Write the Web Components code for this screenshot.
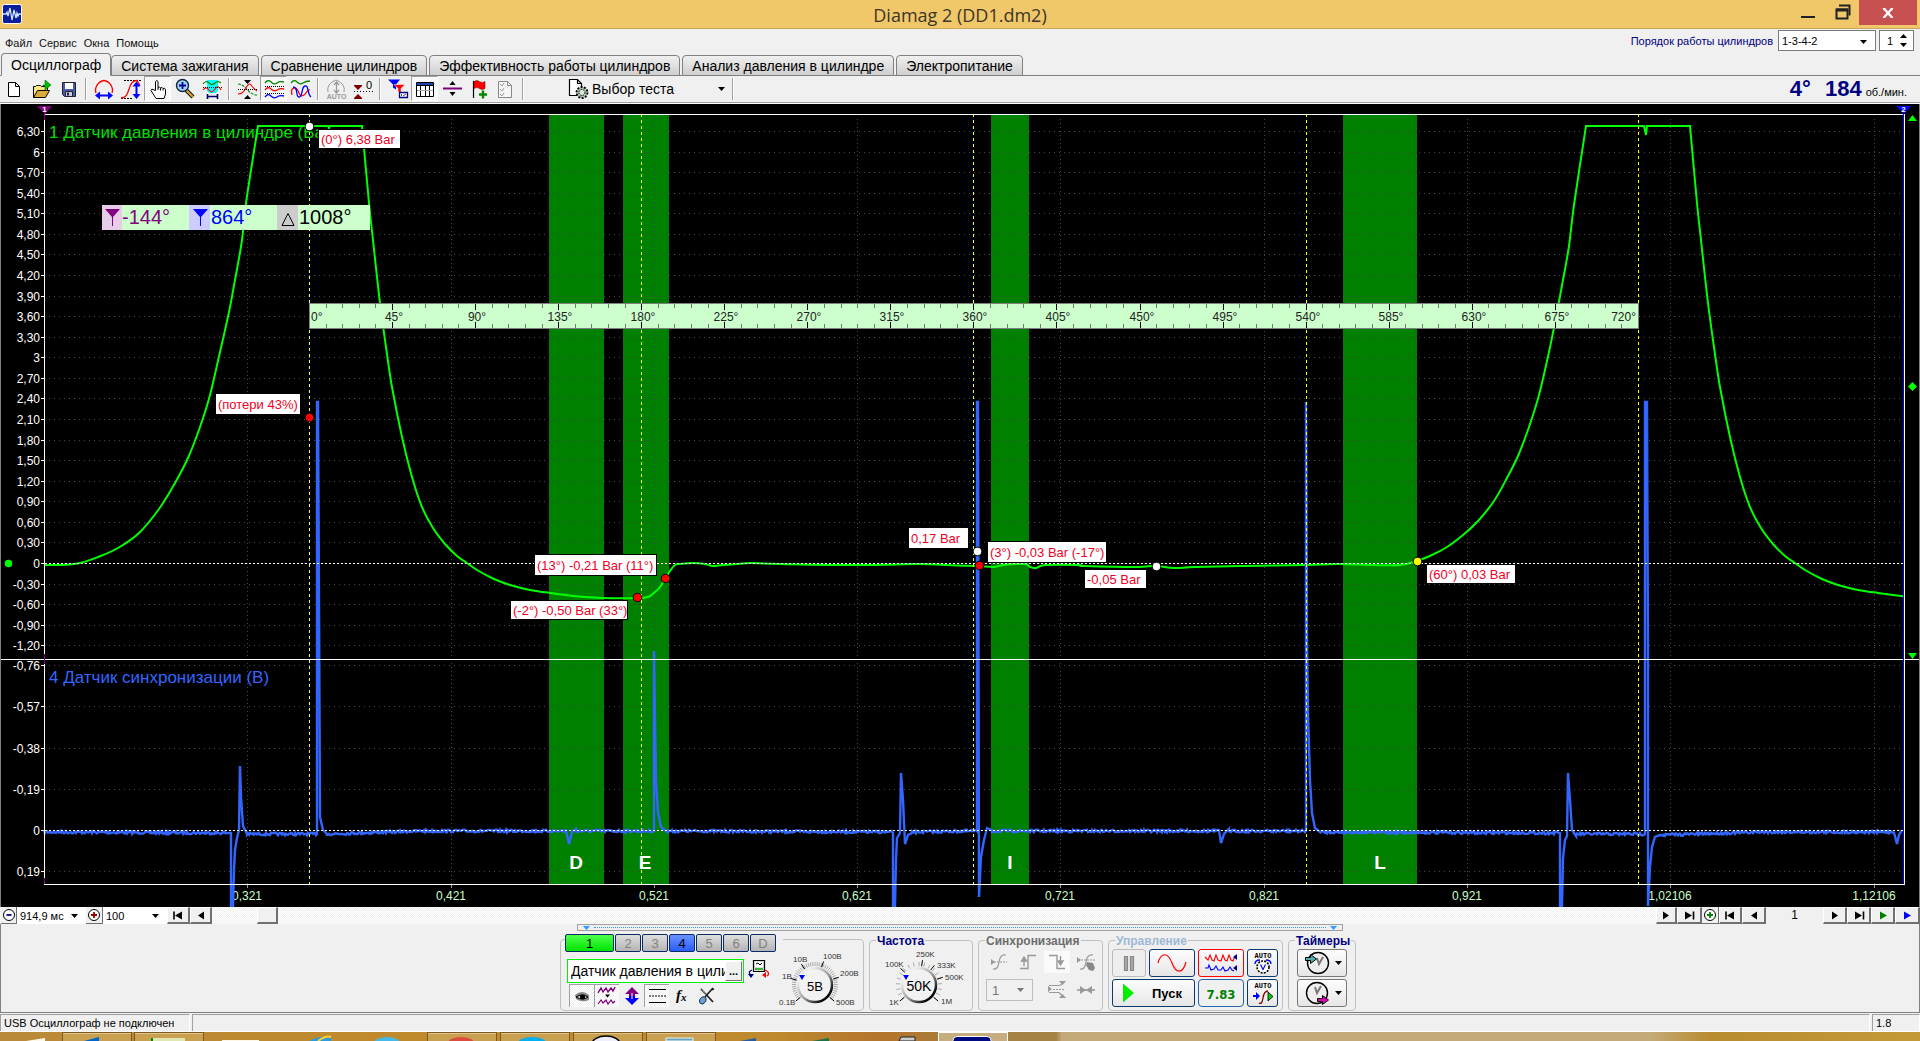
<!DOCTYPE html>
<html lang="ru">
<head>
<meta charset="utf-8">
<title>Diamag 2 (DD1.dm2)</title>
<style>
html,body{margin:0;height:100%}
body{font-family:"Liberation Sans",Arial,sans-serif;font-size:12px;color:#000;background:#f0f0f0}
</style>
</head>
<body>
<dm-app>
  <dm-titlebar slot="title">Diamag 2 (DD1.dm2)</dm-titlebar>
  <dm-header slot="header"></dm-header>
  <dm-toolbar slot="toolbar"></dm-toolbar>
  <dm-scope slot="scope"></dm-scope>
  <dm-timebar slot="timebar"></dm-timebar>
  <dm-panel slot="panel"></dm-panel>
  <dm-status slot="status"></dm-status>
  <dm-taskbar slot="taskbar"></dm-taskbar>
</dm-app>
<script>
const BASE = `:host,*{box-sizing:border-box}button,input,select{font:inherit;color:inherit;margin:0;padding:0;border:0;background:none;border-radius:0;appearance:none;-webkit-appearance:none}svg{display:block}`;
const define = (name, css, html) => customElements.define(name, class extends HTMLElement {
  connectedCallback() {
    if (this.shadowRoot) return;
    const t = document.createElement('template');
    t.innerHTML = `<style>${BASE}${css}</style>${typeof html === 'function' ? html(this) : html}`;
    this.attachShadow({mode: 'open'}).append(t.content.cloneNode(true));
  }
});

/* ---------- icons ---------- */
const P = (d, s, w = 1, f = 'none', x = '') => `<path d="${d}" stroke="${s}" stroke-width="${w}" fill="${f}" ${x}/>`;
const GEAR = '#a8c0a8';
const ICONS = {
  new: [24,22, P('M5.500 4.500h7l4 4v10h-11z M12.500 4.500v4h4','#000',1,'#fff')],
  open: [24,22, P('M3.500 19.500v-11h2l1-1h4l1 1h6v4','#000',1,'#ffe88a')+P('M3.500 19.500l4-7h12l-4 7z','#000',1,'#d9a93a')+P('M13 7h2V2l6 5-6 5V8h-2z','#006400',.6,'#0b0')],
  save: [24,22, P('M5.500 4.500h13v14h-11l-2-2z','#223',1,'#4a5aa8')+P('M8 5h8v6H8z','none',0,'#fff')+P('M8.500 13.500h7v5h-7z','#223',1,'#ccd')+P('M10 14.500h2v3h-2z','none',0,'#224')],
  arcx: [24,22, P('M4 15C2 9 7 3 12 2.500C17 3 22 9 20 15','#f00',1.300)+P('M5 17.500h14','#00f',2)+P('M8 13.500v8l-5-4zM16 13.500v8l5-4z','none',0,'#00f')],
  arcy: [24,22, P('M5 2.500h18M2 20.500h12','#000',1,'none','stroke-dasharray="2 1"')+P('M2 20C12 20 8 2.500 18 2.500l3 5','#f00',1.300)+P('M17.500 6v12','#00f',2)+P('M13.500 8.500h8l-4-5zM13.500 16h8l-4 5z','none',0,'#00f')],
  hand: [24,22, P('M9.500 12.500V3.500q1.500-2 2.500 0v6q1.500-1.500 2.500 .500q1.500-1.500 2.500 .500q2-1 2.500 1v4.500l-1.500 4.500h-8l-5-8q0-2 2-1z M12 9.500v2.500M14.500 10v2.500M17 10.500v2','#000',1,'#fff')],
  zoom: [24,22, P('M13 12l7 7','#000',4)+P('M13 12l7 7','#d8a030',2.400)+'<circle cx="9.500" cy="7.500" r="6" fill="#9cd4f4" stroke="#124" stroke-width="1.400"/>'+P('M9.500 4v7M6 7.500h7','#00a',1.800)],
  cyan: [24,22, P('M7 2h11v11l-2 2H9l-2-2z','none',0,'#0ff')+P('M3 6q3-4 6-1t6 0t6 0','#080',1.200)+P('M3 12q3-4 6 0t6-1t6 1','#f00',1.200)+P('M3 9.500h19','#000',1,'none','stroke-dasharray="1 1"')+P('M7.500 16v5M17.500 16v5M8 18.500h9','#006',1.600)],
  cross: [24,22, P('M3 6c8 0 10 11 19 11','#080',1.100,'none','stroke-dasharray="3 1"')+P('M3 16q5 0 8-6t5-3t6 6','#f00',1.100)+P('M3 11.500h19','#000',1,'none','stroke-dasharray="1 1"')+P('M9 2h7l-3.500 4zM9 21h7l-3.500-4z','none',0,'#000')],
  waves: [24,22, P('M3 5q3-4 6-1t6 1t7-1','#080',1.300)+P('M3 12q3-4 6-1t6 1t7-1','#f00',1.300)+P('M3 19q3-4 6-1t6 1t7-1','#00f',1.300)+P('M3 8.500h19M3 15.500h19','#000',1,'none','stroke-dasharray="1 1"')],
  waves2: [24,22, P('M2 5q3-4 6-1t6 1t7-2','#080',1.300)+P('M3 17c-2-8 4-9 6-4s3 6 6 4s3-6 6-5','#f00',1.300)+P('M4 9c6 0 2 10 6 10s2-10 6-11s2 8 6 11','#00f',1.300)],
  auto: [24,22, P('M4 14q-2-8 8-12q10 4 8 12','#999',1)+P('M12.500 5v9M10 7l2.500-3L15 7M10 12l2.500 3 2.500-3','#999',1.200)+'<text x="12.500" y="21" font-size="7" font-weight="bold" text-anchor="middle" fill="#999">AUTO</text>'],
  zero: [24,22, P('M3 8h8l-4 4zM3 20h8l-4-4z','none',0,'#800000')+P('M3 7.500h8M3 20.500h8','#800000',1)+P('M3 13.500h19','#000',1,'none','stroke-dasharray="1 2"')+'<text x="15" y="11" font-size="11" fill="#000">0</text>'],
  filter: [24,22, P('M2 1.500h12l-4 5v5l-3-2v-3z','none',0,'#00f')+P('M8 6.500h11l-4 4v5l-3-2v-3z','#fff',.5,'#f00')+P('M13.500 14.500h8v5h-8z','#00008b',1.300,'#fff')+P('M15.500 16v2M17 18l3-2','#555',1)],
  table: [24,22, P('M3.500 4.500h17v14h-17z','#000',1,'#fff')+P('M4 5h16v2H4z','none',0,'#24a')+P('M7.500 8v10M12.500 8v10M16.500 8v10M4 7.500h16','#000',1)+P('M4 12.500h16','#aaa',1)],
  split: [24,22, P('M3 10.500h19','#800080',2)+P('M9.500 7h6l-3-4zM9.500 14h6l-3 4z','none',0,'#000')],
  flag: [24,22, P('M6.500 3v17','#000',1.200)+P('M7 3.500q3-2 5.500 0t5.500 0v7q-3 2-5.500 0t-5.500 0z','#600',.5,'#f00')+P('M12 16.500h8M16 12.500v8','#080',2.400)],
  report: [24,22, P('M4.500 3.500h9l4 4v12h-13z','#888',1,'#f6f6f6')+P('M6 6l2 2 2-3M6 11l2 2 2-3M6 16l2 2 2-3','#999',1)+P('M13.500 3.500v4h4','#888',1)],
  test: [26,22, P('M4.500 1.500h8l4 4v12h-12z M12.500 1.500v4h4','#000',1.200,'#fff')+`<circle cx="17" cy="14.500" r="5.500" fill="${GEAR}" stroke="#000" stroke-width="1.800" stroke-dasharray="2 1.400"/><circle cx="17" cy="14.500" r="3" fill="#dfe8df" stroke="#000" stroke-dasharray="1.500 1"/>`],
  eye: [22,22, P('M4 10q7-6 14 0v5q-7 3-13-1z','none',0,'#888')+P('M5 12q6-4 12 0q-5 4-12 0','#000',1,'#ccc')+'<circle cx="11.500" cy="12" r="2.500"/>'],
  purple: [22,22, P('M2 8l3-5 2 4 3-4 2 4 3-4 2 3 2-4','#800080',1.400)+P('M2 19l3-4 2 3 3-3 2 4 3-4 2 3 2-2','#800080',1.200)+P('M9 9.500h5l-2.500 3z','none',0,'#000')],
  updown: [22,22, P('M11 2l7 7h-4v3H8V9H4z','none',0,'#800080')+P('M11 20l7-7h-4v-2H8v2H4z','none',0,'#00f')+P('M11 8v6','#fff',1)],
  lines: [22,22, P('M3 4.500h17M3 17.500h17','#000',1)+P('M3 11h17','#000',1,'none','stroke-dasharray="2 1"')],
  fx: [22,22, '<text x="5" y="15" font-family="Liberation Serif,serif" font-style="italic" font-weight="bold" font-size="15">f</text><text x="10" y="16" font-family="Liberation Serif,serif" font-style="italic" font-weight="bold" font-size="11">x</text>'],
  tools: [22,22, P('M5 4l12 13M17 3l-8 9M15 5l3-1','#222',1.800)+P('M5 3l5 7','#999',1)+P('M4 14q3-4 6-1q1 4-3 6q-5 0-3-5','#234',1,'#6a9fd8')],
  device: [22,22, P('M6.500 2.500h11v11h-11z','#000',1.200,'#ddd')+P('M8 4h8v5H8z','none',0,'#fff')+P('M8 11h8','#0a0',1.500)+P('M9 6l2-1 2 2 2-2','#000',1)+P('M5 12q-5 2-1 5','#00008b',1.300)+P('M1 16h6l-3 4z','none',0,'#00008b')+P('M18 12q6 3 2 6','#f00',1.300)+P('M19 14v6l-4-3z','none',0,'#f00')],
  s1: [20,20, P('M2 10h16','#999',1,'none','stroke-dasharray="2 1"')+P('M4 17q5 1 6-7t7-7','#999',1.200)+P('M2 7v6l4-3z','none',0,'#999')],
  s2: [20,20, P('M2 16.500h8v-13h8','#999',1.400)+P('M6 14V6M3.500 9L6 5l2.500 4z','#999',1.400,'#999')],
  s3: [20,20, P('M2 3.500h8v13h8','#999',1.400)+P('M13.500 4v8M11 9l2.500 4L16 9z','#999',1.400,'#999')],
  s4: [20,20, P('M2 8h18','#999',1,'none','stroke-dasharray="2 1"')+P('M4 17q5 1 6-7t7-7','#999',1.200)+P('M1 5v6l4-3z','none',0,'#999')+P('M11 10l6 1 2 5-2 3-4-1-3-5z','none',0,'#888')],
  s5: [20,20, P('M6 9.500h12','#999',1,'none','stroke-dasharray="2 1"')+P('M2 5.500h10l3-1M2 12.500h10l3 3','#999',1.200)+P('M12 1h7l-3.500 4zM12 18h7l-3.500-4zM1 6v6l4-3z','none',0,'#999')],
  s6: [20,20, P('M1 10h18','#999',1.600)+P('M4 6l6 4-6 4zM16 6l-6 4 6 4z','none',0,'#999')],
  pause: [30,22, P('M10.500 4.500h3v14h-3zM16.500 4.500h3v14h-3z','#888',1.200,'#aaa')],
  sine: [34,22, P('M3 11C6 0 13 0 17 11S28 22 31 10','#f00',1.200)],
  multi: [38,24, P('M3 6l3 3 2-5 2 5 2 1 2-6 2 5 3 1 2-6 2 5 2 1 2-6 2 5 2 1 2-5','#f00',1.100)+P('M3 17l3 0 1-3 2 5 3-1 2-3 2 4 3 0 2-3 2 4 3-1 2-3 2 3 2 1','#00f',1.100)+P('M35 3v6l-4-3zM35 14v6l-4-3z','none',0,'#00008b')],
  autov: [26,26, '<text x="13" y="8" font-family="Liberation Mono,monospace" font-size="7" font-weight="bold" text-anchor="middle">AUTO</text><circle cx="13" cy="17" r="6" fill="#fff" stroke="#000" stroke-width="1.600" stroke-dasharray="2 1.200"/>'+P('M10.500 14.500l2.500 5 2.500-5','#00f',1.200)+P('M5 14q0-4 5-4M21 14q0-4-5-4','#00f',1.300)],
  autop: [26,26, '<text x="13" y="8" font-family="Liberation Mono,monospace" font-size="7" font-weight="bold" text-anchor="middle">AUTO</text>'+P('M9 23q3 2 4-5t5-7','#800000',1.300)+P('M3 16h4','#00f',2)+P('M6 12v8l4-4z','none',0,'#00f')+P('M18 12v9l5-4.500z','#000',.8,'#0c0')],
  play: [14,22, P('M1 1.500v19l11-9.500z','none',0,'#0e0')],
  clock1: [28,24, '<circle cx="15" cy="12" r="10.500" fill="#eee" stroke="#000" stroke-width="1.400"/>'+P('M14 7l2 6 4-7','#777',2)+P('M2.500 6.500h5v-3l6 4.500-6 4.500v-3h-5z','#000',1,'#5aa')],
  clock2: [28,24, '<circle cx="14" cy="12" r="10.500" fill="#eee" stroke="#000" stroke-width="1.400"/>'+P('M12 6l2 6 4-7','#777',2)+P('M14.500 17.500h5v-3l6 4.500-6 4.500v-3h-5z','#000',1,'#d0b')],
  first: [14,11, P('M3 1.500v8','#000',1.600)+P('M11 1.500v8L4 5.500z','none',0,'#000')],
  prev: [14,11, P('M10 1.500v8L4 5.500z','none',0,'#000')],
  next: [14,11, P('M4 1.500v8l6-4z','none',0,'#000')],
  nextg: [14,11, P('M4 1.500v8l7-4z','none',0,'#008000')],
  nextb: [14,11, P('M4 1.500v8l7-4z','none',0,'#00f')],
  last: [14,11, P('M3 1.500v8l7-4z','none',0,'#000')+P('M11.500 1.500v8','#000',1.600)],
  minus: [14,14, '<circle cx="7" cy="7" r="5.500" fill="#fff" stroke="#000"/>'+P('M4.500 7h5','#00008b',1.800)],
  plus: [14,14, '<circle cx="7" cy="7" r="5.500" fill="#fff" stroke="#000"/>'+P('M4 7h6M7 4v6','#900',1.800)],
  plusg: [14,14, '<circle cx="7" cy="7" r="5.500" fill="#fff" stroke="#000"/>'+P('M4 7h6M7 4v6','#080',1.800)],
  down: [7,4, P('M0 0h7L3.500 4z','none',0,'#000')],
  up: [7,4, P('M0 4h7L3.500 0z','none',0,'#000')],
  logo: [20,20, '<rect x=".5" y=".5" width="19" height="19" rx="2" fill="#0a1e9c" stroke="#fff"/>'+P('M1 10h3l1-2 1 4 2-8 2 12 2-10 2 8 1-5 1 3 1-2h3','#cfe4ff',1.300)],
  restore: [16,16, P('M1.500 5.500h11v9h-11z','#222',2)+P('M4 1.500h10.500v10','#222',2)+P('M1 6h12','#222',3)]
};
define('dm-icon', ':host{display:inline-block;flex:none}', el => {
  const [w, h, s] = ICONS[el.getAttribute('name')];
  return `<svg width="${w}" height="${h}" viewBox="0 0 ${w} ${h}" aria-hidden="true">${s}</svg>`;
});
const I = n => `<dm-icon name="${n}"></dm-icon>`;

/* ---------- frame ---------- */
define('dm-app', ':host{display:flex;flex-direction:column;min-height:100vh;overflow:hidden}slot[name=panel]::slotted(*){flex:1}',
  ['title','header','toolbar','scope','timebar','panel','status','taskbar'].map(n => `<slot name="${n}"></slot>`).join(''));

define('dm-titlebar', `
:host{display:grid;grid-template-columns:1fr auto 1fr;height:29px;background:#f0c869;border-bottom:1px solid #c9a45a}
.l{padding:4px 2px}h1{margin:0;font:400 18px/31px "Open Sans","Noto Sans",sans-serif;color:#3c3528}
.r{display:flex;justify-content:flex-end;gap:20px;padding-right:3px}
.r button{height:25px;display:flex;justify-content:center}
.min{width:14px;align-items:flex-end;padding-bottom:7px}.min i{width:14px;height:2px;background:#222}
.res{width:16px;padding-top:4px;margin-right:-12px}
.cl{width:58px;background:#c75050;align-items:center}`,
`<div class="l">${I('logo')}</div><h1><slot></slot></h1><div class="r">
<button class="min" aria-label="Свернуть"><i></i></button><button class="res" aria-label="Восстановить">${I('restore')}</button>
<button class="cl" aria-label="Закрыть"><svg width="12" height="10"><path d="M1.500 0l9 10M10.500 0l-9 10" stroke="#fff" stroke-width="2.400"/></svg></button></div>`);

define('dm-header', `
:host{display:flex;justify-content:space-between;background:#f0f0f0;height:47px;border-bottom:1px solid #808080}
.left{display:flex;flex-direction:column;justify-content:space-between}
nav{display:flex;gap:7px;padding:7px 5px 0;font-size:11px;line-height:15px}
nav a{color:#111;text-decoration:none}
.tabs{display:flex;gap:2px;align-items:flex-end;margin-bottom:-1px;padding-left:1px}
.tabs button{height:21px;padding:0 9px;font-size:14px;border:1px solid #808080;border-radius:4px 4px 0 0;background:linear-gradient(#f0f0f0,#cfcfcf);white-space:nowrap}
.tabs button.on{height:23px;background:#f0f0f0;border-bottom-color:#f0f0f0;margin-right:-2px}
.order{display:flex;align-items:flex-start;gap:3px;padding:1px 6px 0 0;color:#000080;font-size:11px}
.order label{line-height:22px;padding-right:2px}
.box{display:flex;align-items:center;height:21px;border:1px solid #7a7a7a;background:#fff;color:#000;position:relative}
.box select{width:96px;padding-left:3px;height:19px}.box dm-icon{position:absolute;right:8px;top:9px}
.box input{width:33px;height:19px;padding-left:7px}
.spin{position:absolute;right:6px;top:3px;display:flex;flex-direction:column;gap:5px}.spin button{height:4px;display:block}.spin dm-icon{position:static;display:block}`,
`<div class="left"><nav><a href="#file">Файл</a><a href="#service">Сервис</a><a href="#windows">Окна</a><a href="#help">Помощь</a></nav>
<div class="tabs" role="tablist">${['Осциллограф','Система зажигания','Сравнение цилиндров','Эффективность работы цилиндров','Анализ давления в цилиндре','Электропитание'].map((t,i)=>`<button role="tab" class="${i?'':'on'}" aria-selected="${!i}">${t}</button>`).join('')}</div></div>
<div class="order"><label for="ord">Порядок работы цилиндров</label>
<span class="box"><select id="ord"><option>1-3-4-2</option></select>${I('down')}</span>
<span class="box"><input id="cyl" value="1" aria-label="Номер цилиндра"><span class="spin"><button aria-label="Больше">${I('up')}</button><button aria-label="Меньше">${I('down')}</button></span></span></div>`);

const tb = (n, l, on) => `<button class="${on ? 'on' : ''}" aria-label="${l}">${I(n)}</button>`;
define('dm-toolbar', `
:host{display:flex;justify-content:space-between;height:28px;background:#f0f0f0;border-bottom:1px solid #fff;box-shadow:inset 0 -1px #a0a0a0;padding-bottom:2px}
.l{display:flex;padding-left:1px;align-items:center}
.l>button{width:27px;height:25px;display:flex;align-items:center;justify-content:center}
.l>button.on{background:repeating-conic-gradient(#fff 0 25%,#f0f0f0 0 50%) 0 0/2px 2px;border:1px solid #a0a0a0;border-right-color:#fff;border-bottom-color:#fff}
i{width:2px;height:22px;margin:0 3px;background:#a0a0a0;border-right:1px solid #fff}
.l>button.test{width:202px;padding:0 4px 0 38px;gap:1px;font-size:14px}.test span{flex:1;text-align:left}
.r{display:flex;align-items:baseline;color:#000080;padding-right:13px;font:bold 22px/26px "Liberation Sans",sans-serif}
.r b+b{margin-left:14px}.r small{font:11px "Liberation Sans",sans-serif;color:#000;margin-left:4px}`,
`<div class="l">${tb('new','Новый')}${tb('open','Открыть')}${tb('save','Сохранить')}<i></i>${tb('arcx','Растянуть')}${tb('arcy','Масштаб')}${tb('hand','Перемещение',1)}${tb('zoom','Лупа')}${tb('cyan','Участок')}<i></i>${tb('cross','Совместить')}${tb('waves','Раздельно',1)}${tb('waves2','Вместе')}<i></i>${tb('auto','Авто')}${tb('zero','Ноль')}<i></i>${tb('filter','Линейки')}${tb('table','Таблица',1)}${tb('split','Разделитель')}${tb('flag','Метка')}${tb('report','Отчёт')}<i></i>
<button class="test">${I('test')}<span>Выбор теста</span>${I('down')}</button><i></i></div>
<div class="r"><b>4°</b><b>184</b><small>об./мин.</small></div>`);

/* ---------- oscilloscope ---------- */
function spline(p) {
  let d = '';
  for (let i = 0; i < p.length - 1; i++) {
    const a = p[i-1] || p[i], b = p[i], c = p[i+1], e = p[i+2] || c;
    d += `C${(b[0]+(c[0]-a[0])/6).toFixed(1)} ${(b[1]+(c[1]-a[1])/6).toFixed(1)} ${(c[0]-(e[0]-b[0])/6).toFixed(1)} ${(c[1]-(e[1]-b[1])/6).toFixed(1)} ${c[0]} ${c[1]}`;
  }
  return d;
}
function pressure() {
  const s = 1328;
  const rise = [[44,565],[61,565],[80,563],[98,557],[118,548],[139,533],[159,509],[175,483],[188,458],[200,427],[210,395],[220,352],[229,312],[235,280],[242,240],[246,203],[258,126]];
  const fall = [[362,126],[369,203],[373,240],[380,303],[386,347],[392,387],[402,437],[412,477],[422,507],[433,528],[445,544],[457,556],[467,563],[477,570],[494,579],[510,585],[530,590],[550,593],[573,596],[603,598],[637,598],[648,597],[655,592],[660,587],[665,579],[670,571],[675,565],[680,564],[693,563],[705,564],[713,566],[723,565],[738,564],[750,563],[780,564],[860,565],[920,564],[945,565],[976,566],[994,567],[1003,565],[1025,564],[1030,567],[1036,568],[1045,565],[1079,565],[1084,566],[1137,567],[1155,566],[1175,568],[1195,567],[1244,566],[1306,565],[1338,564],[1373,565],[1400,565],[1417,561],[1432,555],[1447,547],[1463,535],[1478,521],[1494,501],[1507,478],[1518,456],[1529,427],[1539,395],[1549,352],[1557,312],[1563,280],[1569,246],[1574,205],[1586,126]];
  const f2 = fall.slice(0, 19).map(([x,y]) => [x+s, y]).concat([[1904,596]]);
  return `M44 565${spline(rise)}L328 126L329 128L330 126L362 126${spline(fall)}L1644 126L1646 135L1647 126L1690 126${spline(f2)}`;
}
function sync() {
  let seed = 7; const rnd = () => (seed = (seed * 16807) % 2147483647) / 2147483647;
  let d = 'M44 832';
  const to = (...p) => { for (let i = 0; i < p.length; i += 2) d += `L${p[i]} ${p[i+1]}`; };
  const run = (x0, y0, x1, y1) => { for (let x = x0; x < x1; x++) d += `L${x} ${(y0 + (y1-y0)*(x-x0)/(x1-x0) + (rnd()-.5)*2.6).toFixed(1)}`; };
  run(44,832,230,833); to(231,833,231,906,233,906,234,870,235,850,237,838,239,830,240,766,241,797,243,826,247,834);
  run(247,834,317,834); to(317,834,317,402,318,402,319,600,320,817,323,830,327,834);
  run(327,834,420,831); run(420,831,567,831); to(569,844,572,832,576,829);
  run(576,831,654,831); to(654,831,654,651,655,720,656,780,658,812,661,827,667,832);
  run(667,831,892,832); to(893,833,893,906,895,906,896,860,897,838,900,833,901,773,903,800,905,844,908,835,912,833);
  run(912,832,977,831); to(977,831,977,402,978,402,979,897,981,857,984,840,987,828,992,830);
  run(992,831,1220,831); to(1221,843,1224,834,1229,829);
  run(1229,831,1306,831); to(1306,831,1306,402,1307,640,1308,713,1310,780,1312,813,1315,828,1320,832);
  run(1320,832,1559,833); to(1560,833,1560,906,1562,906,1563,858,1565,840,1567,836,1568,773,1570,800,1572,830,1576,836);
  run(1576,834,1645,834); to(1645,834,1645,402,1647,402,1648,650,1648,906,1650,867,1652,847,1655,837,1660,835);
  run(1660,835,1760,832); run(1760,832,1895,832); to(1897,844,1899,835,1902,830);
  return d;
}
function scope() {
  let s = '<rect x="0" y="104" width="1920" height="803" fill="#000"/>';
  for (const [x, w] of [[549,55],[623,46],[991,38],[1343,74]]) s += `<rect x="${x}" y="115" width="${w}" height="769" fill="#008000"/>`;
  const lab = [];
  for (let k = -4; k <= 21; k++) {
    const y = Math.round(563 - 20.57 * k);
    lab.push([y, k % 10 === 0 ? String(k * 3 / 10) : (k * .3).toFixed(2).replace('.', ',')]);
  }
  [[665,'-0,76'],[706,'-0,57'],[748,'-0,38'],[789,'-0,19'],[830,'0'],[871,'0,19']].forEach(r => lab.push(r));
  for (const [y, t] of lab) {
    s += `<path d="M49 ${y}.5H1903" stroke="#484848" stroke-dasharray="1 4" shape-rendering="crispEdges"/><path d="M41 ${y}.5h4" stroke="#fff" shape-rendering="crispEdges"/><text x="40" y="${y+5}" text-anchor="end" fill="#fff" font-size="12">${t}</text>`;
  }
  for (const [x, t] of [[247,'0,321'],[451,'0,421'],[654,'0,521'],[857,'0,621'],[1060,'0,721'],[1264,'0,821'],[1467,'0,921'],[1670,'1,02106'],[1874,'1,12106']])
    s += `<path d="M${x}.5 119V884" stroke="#484848" stroke-dasharray="1 3" shape-rendering="crispEdges"/><path d="M${x}.5 885v3" stroke="#999"/><text x="${x}" y="900" text-anchor="middle" fill="#ccffcc" font-size="12">${t}</text>`;
  s += '<text x="49" y="138" fill="#00e000" font-size="17">1 Датчик давления в цилиндре (Ба</text><text x="49" y="683" fill="#3366ff" font-size="17">4 Датчик синхронизации (В)</text>';
  s += `<path d="${pressure()}" fill="none" stroke="#00ff00" stroke-width="2"/><path d="${sync()}" fill="none" stroke="#3366ff" stroke-width="2.400"/>`;
  s += '<path d="M45 563.500H1903M45 830.500H1903" stroke="#fff" stroke-dasharray="2 2" shape-rendering="crispEdges"/>';
  s += '<path d="M44 114.500H1905M1 659.500H1919M44 884.500H1905M44.500 114V885M1904.500 114V885" stroke="#fff" shape-rendering="crispEdges"/><path d="M1903.500 110V884" stroke="#00f" shape-rendering="crispEdges"/><path d="M44.500 112v8M44.500 654v10M44.500 878v6" stroke="#800080" shape-rendering="crispEdges"/>';
  for (const x of [309,641,973,1306,1638]) s += `<path d="M${x}.5 114V884" stroke="#ff0" stroke-dasharray="3 3" shape-rendering="crispEdges"/>`;
  /* crankshaft angle ruler */
  s += '<rect x="309.500" y="303.500" width="1329" height="25" fill="#ccffcc" stroke="#808080" shape-rendering="crispEdges"/>';
  for (let i = 1; i < 80; i++) {
    const x = Math.round(309 + 16.61 * i), m = i % 5 === 0, h = m ? 6 : 4;
    s += `<path d="M${x}.5 304v${h}M${x}.5 328v-${h}" stroke="${m ? '#000' : '#777'}" shape-rendering="crispEdges"/>`;
    if (m) s += `<text x="${x+2}" y="321" text-anchor="middle" fill="#222" font-size="12">${i*9}°</text>`;
  }
  s += '<text x="311" y="321" fill="#222" font-size="12">0°</text><text x="1636" y="321" text-anchor="end" fill="#222" font-size="12">720°</text>';
  /* cursor readout */
  s += '<rect x="102" y="205" width="268" height="25" fill="#ccffcc"/><rect x="102" y="205" width="20" height="25" fill="#e6cce6"/><rect x="189" y="205" width="21" height="25" fill="#ccccff"/><rect x="277" y="205" width="21" height="25" fill="#ccc"/>';
  s += '<path d="M105 209h15l-7 8v9h-1v-9z" fill="#800080"/><path d="M193 209h15l-7 8v9h-1v-9z" fill="#00f"/><path d="M288 213.500l6 12h-12z" fill="none" stroke="#000"/>';
  s += '<g font-size="20"><text x="122" y="224" fill="#800080">-144°</text><text x="211" y="224" fill="#00f">864°</text><text x="299" y="224">1008°</text></g>';
  for (const [x, t] of [[576,'D'],[645,'E'],[1010,'I'],[1380,'L']]) s += `<text x="${x}" y="869" text-anchor="middle" font-size="19" font-weight="bold" fill="#fff">${t}</text>`;
  for (const [x,y,w,h,t] of [[319,130,81,18,'(0°) 6,38 Bar'],[216,394,84,20,'(потери 43%)'],[535,555,121,20,'(13°) -0,21 Bar (11°)'],[511,601,116,18,'(-2°) -0,50 Bar (33°)'],[909,528,59,20,'0,17 Bar'],[988,542,118,20,'(3°) -0,03 Bar (-17°)'],[1085,570,61,18,'-0,05 Bar'],[1427,565,88,18,'(60°) 0,03 Bar']])
    s += `<rect x="${x-1}" y="${y-1}" width="${w+2}" height="${h+2}"/><rect x="${x}" y="${y}" width="${w}" height="${h}" fill="#fff"/><text x="${x+2}" y="${y+(h>18?15:14)}" font-size="13" fill="#f00026">${t}</text>`;
  for (const [x,y,c] of [[309,126,'#fff'],[309,417,'#f00'],[637,597,'#f00'],[665,578,'#f00'],[977,551,'#fff'],[979,565,'#f00'],[1156,566,'#fff'],[1417,561,'#ff0'],[8,563,'#0f0']])
    s += `<circle cx="${x}.5" cy="${y}.5" r="4.300" fill="${c}" stroke="#000"/>`;
  s += '<path d="M37 106h15l-7 8z" fill="#800080"/><path d="M1896 106h15l-7 8z" fill="#00f"/><g font-size="8" font-weight="bold" fill="#fff" text-anchor="middle"><text x="44.500" y="112">1</text><text x="1903.500" y="112">2</text></g>';
  s += '<path d="M1908 121h9l-4.500-6zM1908 653h9l-4.500 6zM1912.500 382l4.500 4.500-4.500 4.500-4.500-4.500z" fill="#0f0"/><path d="M.5 104V907M1919.500 104V907" stroke="#808080"/>';
  return s;
}
define('dm-scope', ':host{display:block}svg{width:100%;height:auto}text{font-family:"Liberation Sans",Arial,sans-serif}',
  () => `<svg viewBox="0 104 1920 803" role="img" aria-label="Осциллограмма">${scope()}</svg>`);

/* ---------- time scale row ---------- */
const nb = (n, l, w = 23) => `<button class="b" style="width:${w}px" aria-label="${l}">${I(n)}</button>`;
define('dm-timebar', `
:host{display:flex;height:17px;background:repeating-conic-gradient(#fff 0 25%,#f0f0f0 0 50%) 0 0/2px 2px;padding-left:1px}
.b{height:17px;flex:none;display:flex;align-items:center;justify-content:center;background:#f0f0f0;border:1px solid #fff;border-right:2px solid #707070;border-bottom:2px solid #707070;overflow:hidden}
.b.round{border-width:0 1px 1px 0}
.sel{position:relative;background:#fff;height:17px;font-size:11px}.sel select{height:17px;padding-left:3px;width:69px}.sel dm-icon{position:absolute;right:8px;top:7px}
.n{width:64px}.n select{width:64px}
.track{flex:1;padding-left:45px}.n1{width:57px;background:#f0f0f0;text-align:center;line-height:17px;font-size:12px}`,
`<button class="b round" style="width:16px" aria-label="Сжать">${I('minus')}</button><span class="sel"><select aria-label="Развёртка"><option>914,9 мс</option></select>${I('down')}</span>
<button class="b round" style="width:17px" aria-label="Растянуть">${I('plus')}</button><span class="sel n"><select aria-label="Масштаб, %"><option>100</option></select>${I('down')}</span>
${nb('first','В начало')}${nb('prev','Влево',22)}<div class="track"><button class="b" style="width:21px" aria-label="Ползунок"></button></div>
${nb('next','Вправо',21)}${nb('last','В конец',25)}<button class="b round" style="width:17px" aria-label="Добавить кадр">${I('plusg')}</button>${nb('first','Первый кадр')}${nb('prev','Предыдущий кадр',24)}<output class="n1">1</output>${nb('next','Следующий кадр',24)}${nb('last','Последний кадр',24)}${nb('nextg','Воспроизвести',24)}${nb('nextb','Воспроизвести всё',25)}`);

/* ---------- knobs ---------- */
define('dm-knob', ':host{display:block}svg{font:8px "Liberation Sans",sans-serif}', el => {
  const cx = +el.getAttribute('cx'), cy = 45, n = +el.getAttribute('ticks');
  const marks = el.getAttribute('marks').split(';').map(m => m.split(','));
  let s = '';
  const ray = (a, r0, r1, c) => { a = a * Math.PI / 180; s += `<path d="M${(cx+r0*Math.cos(a)).toFixed(1)} ${(cy+r0*Math.sin(a)).toFixed(1)}L${(cx+r1*Math.cos(a)).toFixed(1)} ${(cy+r1*Math.sin(a)).toFixed(1)}" stroke="${c}"/>`; };
  for (let i = 0; i <= n; i++) ray(140 + 260 * i / n, 19, 23, '#aaa');
  marks.forEach(m => { ray(+m[3], 19, 25, '#000'); s += `<text x="${m[1]}" y="${m[2]}" fill="#333">${m[0]}</text>`; });
  return `<svg width="${el.getAttribute('w')}" height="68" role="img" aria-label="${el.getAttribute('label')}">
  <defs><linearGradient id="g" x1="0" y1="0" x2="1" y2="1"><stop offset=".2" stop-color="#eee"/><stop offset=".55" stop-color="#999"/><stop offset=".85" stop-color="#000"/></linearGradient></defs>${s}
  <circle cx="${cx}" cy="${cy}" r="17" fill="#f2f2f2" stroke="url(#g)" stroke-width="2.500"/><path d="M${cx-16} ${cy-10}h6l-3 5z" fill="#00f"/>
  <text x="${cx}" y="${cy+6}" font-size="${el.getAttribute('size')}" text-anchor="middle">${el.getAttribute('value')}</text></svg>`;
});

/* ---------- control groups ---------- */
define('dm-group', `
:host{display:block;margin-top:4px}
fieldset{margin:0;padding:0;border:1px solid #c0c0c0;border-radius:4px;height:76px;min-width:0}
legend{padding:0 1px;margin-left:6px;font-weight:bold;font-size:12px;line-height:13px;height:11px;color:var(--c,#000080)}`,
el => `<fieldset><legend>${el.getAttribute('name')}</legend><slot></slot></fieldset>`);

define('dm-channel', `
:host{display:block;width:304px;margin-top:8px}
fieldset{margin:0;padding:0;border:1px solid #c0c0c0;border-radius:4px;height:72px;display:flex;justify-content:space-between}
.left{width:216px}.tabs{display:flex;gap:1px;background:#f0f0f0;margin:-6px 0 0 4px;width:218px;position:relative}
.tabs button{width:26px;height:18px;border:1px solid #0a2a66;border-radius:2px;background:linear-gradient(#dedede,#b4b4b4);color:#808080;font-size:13px;line-height:15px}
.tabs .a{width:49px;background:linear-gradient(#4cff4c,#00e400);color:#000}.tabs .d{background:linear-gradient(#6a92ff,#2b5cff);color:#000}
.row{display:flex;align-items:center;gap:3px;margin:6px 0 0 6px}
.name{display:flex;width:177px;height:24px;border:1px solid #00f000;background:#fff;padding:1px}
.name input{flex:1;min-width:0;font-size:14px;padding-left:2px;background:#fff}
.name button{width:17px;height:20px;background:#f0f0f0;border:1px solid #fff;border-right-color:#777;border-bottom-color:#777;font-size:11px;font-weight:bold;line-height:8px}
.icons{display:flex;margin:1px 0 0 8px}.icons button{width:25px;height:23px;display:flex;align-items:center;justify-content:center}
.icons .on{background:repeating-conic-gradient(#fff 0 25%,#f0f0f0 0 50%) 0 0/2px 2px;border-left:1px solid #a0a0a0;border-top:1px solid #a0a0a0}
.plain{display:block}dm-knob{margin-top:0;position:relative}`,
`<fieldset aria-label="Канал"><div class="left"><div class="tabs">${['1','2','3','4','5','6','D'].map(c => `<button class="${c==='1'?'a':c==='4'?'d':''}">${c}</button>`).join('')}</div>
<div class="row"><span class="name"><input value="Датчик давления в цилиндре" aria-label="Датчик канала"><button aria-label="Выбрать датчик">...</button></span><button class="plain" aria-label="Прибор">${I('device')}</button></div>
<div class="icons"><button class="on" aria-label="Показать">${I('eye')}</button><button class="on" aria-label="Сгладить">${I('purple')}</button><button aria-label="Инвертировать">${I('updown')}</button><button class="on" aria-label="Линии">${I('lines')}</button><button aria-label="Функция">${I('fx')}</button><button aria-label="Настройки">${I('tools')}</button></div></div>
<dm-knob w="86" cx="38" size="13" value="5В" ticks="44" label="Чувствительность 5В" marks="0.1В,2,65,140;1В,5,39,195;10В,16,22,237;100В,46,19,290;200В,63,36,342;500В,59,65,40"></dm-knob></fieldset>`);

define('dm-panel', `
:host{display:flex;flex-direction:column;align-items:center;background:#f0f0f0;border-bottom:1px solid #808080;border-left:1px solid #808080;border-right:1px solid #808080}
.split{width:766px;height:7px;border:1px solid #a0a0a0;display:flex;align-items:center;justify-content:space-between;padding:0 5px}
.split i{flex:1;margin:0 4px;border-top:1px dotted #39f}
.groups{display:flex;gap:5px;align-items:flex-start;padding-right:4px}
.freq{width:104px}.sy{width:125px;--c:#6d6d6d}.ct{width:175px;--c:#9fb8d4}.tm{width:68px}
.freq dm-knob{margin-top:-6px}
.grid{display:grid;gap:2px 3px;padding:3px 3px 0}
.sg{grid-template-columns:repeat(4,26px);padding:5px 7px 0;gap:6px 3px;align-items:center}
.sg button{height:22px;display:flex;align-items:center;justify-content:center}.sg .on{background:#fafafa}
.sg .s{grid-column:span 2;position:relative;height:22px}.s select{width:47px;height:22px;border:1px solid #aaa;padding-left:5px;color:#444;font-size:13px}.s dm-icon{position:absolute;left:31px;top:9px;opacity:.5}
.cg{grid-template-columns:34px 46px 46px 31px}
.cg button,.tg button{height:28px;border:1px solid #0a3a70;border-radius:3px;background:linear-gradient(#fdfdfd,#e6e6e6);display:flex;align-items:center;justify-content:center}
.cg .off{border-color:#bbb;background:#eee}.cg .red{border-color:#f00}.cg .go{grid-column:span 2;font-weight:bold;font-size:13px;gap:16px;justify-content:flex-start;padding-left:9px}
.cg output{border:1px solid #2266b0;border-radius:4px;color:#008000;font:bold 13px/30px "DejaVu Sans Condensed","DejaVu Sans",sans-serif;text-align:center;height:28px}
.tg{padding:3px 8px 0}.tg button{border-color:#777;gap:4px}`,
`<div class="split"><svg width="7" height="4"><path d="M0 0h7L3.500 4z" fill="#39f"/></svg><i></i><svg width="7" height="4"><path d="M0 0h7L3.500 4z" fill="#39f"/></svg></div>
<div class="groups"><dm-channel></dm-channel>
<dm-group class="freq" name="Частота"><dm-knob w="102" cx="49" size="14" value="50K" ticks="18" label="Частота 50K" marks="1K,19,65,140;100K,15,27,222;250K,46,17,278;333K,67,28,308;500K,75,40,342;1M,71,64,40"></dm-knob></dm-group>
<dm-group class="sy" name="Синхронизация"><div class="grid sg"><button disabled aria-label="Уровень">${I('s1')}</button><button disabled aria-label="Фронт">${I('s2')}</button><button disabled class="on" aria-label="Спад">${I('s3')}</button><button disabled aria-label="Вручную">${I('s4')}</button><span class="s"><select aria-label="Канал синхронизации" disabled><option>1</option></select>${I('down')}</span><button disabled aria-label="Порог">${I('s5')}</button><button disabled aria-label="Центр">${I('s6')}</button></div></dm-group>
<dm-group class="ct" name="Управление"><div class="grid cg"><button class="off" disabled aria-label="Пауза">${I('pause')}</button><button aria-label="Синус">${I('sine')}</button><button class="red" aria-label="Запись">${I('multi')}</button><button aria-label="Авто чувствительность">${I('autov')}</button><button class="go">${I('play')}<span>Пуск</span></button><output>7.83</output><button aria-label="Авто пуск">${I('autop')}</button></div></dm-group>
<dm-group class="tm" name="Таймеры"><div class="grid tg"><button aria-label="Таймер пуска">${I('clock1')}${I('down')}</button><button aria-label="Таймер остановки">${I('clock2')}${I('down')}</button></div></dm-group></div>`);

define('dm-status', `
:host{display:flex;gap:2px;height:19px;background:#f0f0f0;padding-top:1px;font-size:11px;line-height:17px;border-bottom:1px solid #fff}
div{border-left:1px solid #a0a0a0;border-top:1px solid #a0a0a0;border-right:1px solid #fff;padding-left:3px;white-space:nowrap}
.a{width:190px}.b{flex:1}.c{width:48px}`,
`<div class="a">USB Осциллограф не подключен</div><div class="b"></div><div class="c">1.8</div>`);

define('dm-taskbar', `:host{display:block;height:9px;overflow:hidden;background:linear-gradient(90deg,#b98a3a,#c08a2c 20%,#bf8a2e 40%,#b3742c 46%,#a58345 52%,#a58345 55%,#c4aa78 55.300%,#c4aa78 86%,#b88c30 89%,#c49a38)}svg{width:100%;height:9px}`,
() => {
  let s = '';
  for (const [x, w] of [[62,69],[134,69],[427,69],[500,69],[573,69],[646,69]]) s += `<rect x="${x}.5" y=".5" width="${w}" height="12" fill="#c9a050" stroke="#7a5a20"/><path d="M${x+1} 1.500h${w-1}" stroke="#e2c48c"/>`;
  s += '<path d="M203.500 0v9" stroke="#7a5a20"/><rect x="938.500" y=".5" width="69" height="12" fill="#c6ad80" stroke="#fff"/>';
  s += '<path d="M26 9l19-3v3zM222 8h37v1h-37z" fill="#fff8e8"/><path d="M84 9l15-4v4z" fill="#06c"/><path d="M151 9V6h34v3z" fill="#dfe8b0"/><path d="M152 6v3" stroke="#080" stroke-width="2"/>';
  s += '<path d="M309 9q12-6 22-3v3" fill="#2a9de0"/><path d="M318 9q8-6 13-4" fill="none" stroke="#f8d030" stroke-width="2"/><ellipse cx="387" cy="11" rx="13" ry="6" fill="#48b8e8"/><ellipse cx="461" cy="11" rx="13" ry="6" fill="#dc4c3c"/><ellipse cx="532" cy="11" rx="14" ry="6" fill="#00aff0"/><ellipse cx="606" cy="12" rx="14" ry="8" fill="#eef" stroke="#000" stroke-width="1.500"/>';
  s += '<path d="M666 9V6h27v3z" fill="#6aa6b8" stroke="#e8f4f8"/><path d="M740 9l16-3v3z" fill="#2a5aa0"/><path d="M812 9l17-3v3z" fill="#1f7246"/><path d="M899 9l2-4h14v4z" fill="#ccc" stroke="#222"/><rect x="953" y="4.500" width="38" height="12" rx="4" fill="#000a80" stroke="#fff"/>';
  return `<svg viewBox="0 0 1920 9" preserveAspectRatio="xMinYMin slice" aria-hidden="true">${s}</svg>`;
});
</script>
</body>
</html>
